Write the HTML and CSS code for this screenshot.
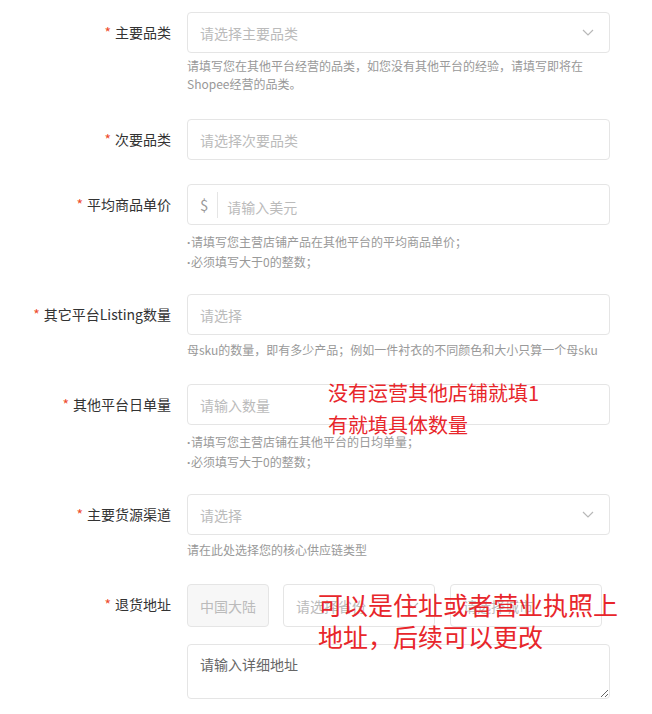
FILE: index.html
```html
<!DOCTYPE html>
<html lang="zh-CN">

<head>
    <meta charset="UTF-8">
    <meta name="viewport" content="width=device-width, initial-scale=1.0">
    <title>店铺信息</title>
    <link rel="stylesheet" href="styles.css">
</head>

<body>

    <div class="form">
        <div class="form-item">
            <label class="form-label"><span class="req">*</span>主要品类</label>
            <div class="form-control">
                <div class="select">
                    <span class="placeholder">请选择主要品类</span>
                    <svg class="arrow" width="12" height="7" viewBox="0 0 12 7"><polyline points="1,1 6,6 11,1" /></svg>
                </div>
                <div class="help tight">请填写您在其他平台经营的品类，如您没有其他平台的经验，请填写即将在Shopee经营的品类。</div>
            </div>
        </div>

        <div class="form-item">
            <label class="form-label"><span class="req">*</span>次要品类</label>
            <div class="form-control">
                <div class="select">
                    <span class="placeholder">请选择次要品类</span>
                </div>
            </div>
        </div>

        <div class="form-item">
            <label class="form-label"><span class="req">*</span>平均商品单价</label>
            <div class="form-control">
                <div class="select price">
                    <span class="prefix">$</span>
                    <span class="placeholder">请输入美元</span>
                </div>
                <div class="help list">
                    <div><span class="dot">·</span>请填写您主营店铺产品在其他平台的平均商品单价；</div>
                    <div><span class="dot">·</span>必须填写大于0的整数；</div>
                </div>
            </div>
        </div>

        <div class="form-item">
            <label class="form-label"><span class="req">*</span>其它平台Listing数量</label>
            <div class="form-control">
                <div class="select">
                    <span class="placeholder">请选择</span>
                </div>
                <div class="help">母sku的数量，即有多少产品；例如一件衬衣的不同颜色和大小只算一个母sku</div>
            </div>
        </div>

        <div class="form-item">
            <label class="form-label"><span class="req">*</span>其他平台日单量</label>
            <div class="form-control">
                <div class="select">
                    <span class="placeholder">请输入数量</span>
                </div>
                <div class="help list">
                    <div><span class="dot">·</span>请填写您主营店铺在其他平台的日均单量；</div>
                    <div><span class="dot">·</span>必须填写大于0的整数；</div>
                </div>
                <div class="note note-small">没有运营其他店铺就填1<br>有就填具体数量</div>
            </div>
        </div>

        <div class="form-item">
            <label class="form-label"><span class="req">*</span>主要货源渠道</label>
            <div class="form-control">
                <div class="select">
                    <span class="placeholder">请选择</span>
                    <svg class="arrow" width="12" height="7" viewBox="0 0 12 7"><polyline points="1,1 6,6 11,1" /></svg>
                </div>
                <div class="help">请在此处选择您的核心供应链类型</div>
            </div>
        </div>

        <div class="form-item">
            <label class="form-label"><span class="req">*</span>退货地址</label>
            <div class="form-control">
                <div class="address-row">
                    <div class="select country disabled">
                        <span class="placeholder">中国大陆</span>
                    </div>
                    <div class="select province">
                        <span class="placeholder">请选择省份</span>
                        <svg class="arrow" width="12" height="7" viewBox="0 0 12 7"><polyline points="1,1 6,6 11,1" /></svg>
                    </div>
                    <div class="select city">
                        <span class="placeholder">请选择城市</span>
                    </div>
                </div>
                <textarea class="detail" placeholder="请输入详细地址"></textarea>
                <div class="note note-big">可以是住址或者营业执照上<br>地址，后续可以更改</div>
            </div>
        </div>
    </div>

</body>

</html>
```

FILE: styles.css
```css
/* Reset */
* {
    margin: 0;
    padding: 0;
    box-sizing: border-box;
}

body {
    font-family: "Noto Sans CJK SC", "Noto Sans", sans-serif;
    background-color: #fff;
    color: #333;
    width: 652px;
}

/* Form layout */
.form {
    width: 610px;
    padding-top: 12px;
}

.form-item {
    display: flex;
    margin-bottom: 24px;
}

.form-label {
    width: 171px;
    flex-shrink: 0;
    height: 41px;
    line-height: 41px;
    text-align: right;
    font-size: 14px;
    color: #333;
}

.req {
    color: #ee4d2d;
    margin-right: 4px;
}

.form-control {
    position: relative;
    flex: 1;
    margin-left: 16px;
}

/* Inputs */
.select {
    display: flex;
    align-items: center;
    height: 41px;
    padding: 0 12px;
    border: 1px solid #e5e5e5;
    border-radius: 4px;
    background-color: #fff;
    font-size: 14px;
}

.placeholder {
    flex: 1;
    color: #bbb;
    white-space: nowrap;
    overflow: hidden;
}

.arrow {
    flex-shrink: 0;
    margin-right: 3px;
}

.arrow polyline {
    fill: none;
    stroke: #b8b8b8;
    stroke-width: 1.2;
}

.price .prefix {
    color: #999;
    font-size: 15px;
    padding-right: 9px;
    margin-right: 9px;
    border-right: 1px solid #e5e5e5;
    line-height: 26px;
}

.price .placeholder {
    padding-top: 4px;
}

/* Help text */
.help {
    margin-top: 5px;
    font-size: 12px;
    line-height: 20px;
    color: #999;
}

.help.tight {
    margin-top: 4px;
    padding-bottom: 2px;
    line-height: 18px;
}

.help.list {
    margin-top: 7px;
    margin-bottom: -2px;
}

.help.list div {
    height: 20px;
}

.dot {
    font-family: "Liberation Sans", sans-serif;
    font-weight: bold;
    line-height: 1;
}

/* Address */
.address-row {
    display: flex;
}

.country {
    width: 82px;
    height: 43px;
    margin-right: 14px;
}

.disabled {
    background-color: #f7f7f7;
}

.province {
    width: 152px;
    height: 43px;
    margin-right: 15px;
}

.city {
    width: 152px;
    height: 43px;
}

.detail {
    display: block;
    width: 100%;
    height: 55px;
    margin-top: 17px;
    padding: 9px 12px;
    border: 1px solid #e5e5e5;
    border-radius: 4px;
    font-family: inherit;
    font-size: 14px;
    line-height: 20px;
    resize: vertical;
}

.detail::placeholder {
    color: #666;
}

/* Red annotations over the form */
.note {
    position: absolute;
    color: #e8262b;
    white-space: nowrap;
    line-height: 32px;
}

.note-small {
    left: 141px;
    top: -7px;
    font-size: 20px;
}

.note-big {
    left: 131px;
    top: 4px;
    font-size: 25px;
}
```
